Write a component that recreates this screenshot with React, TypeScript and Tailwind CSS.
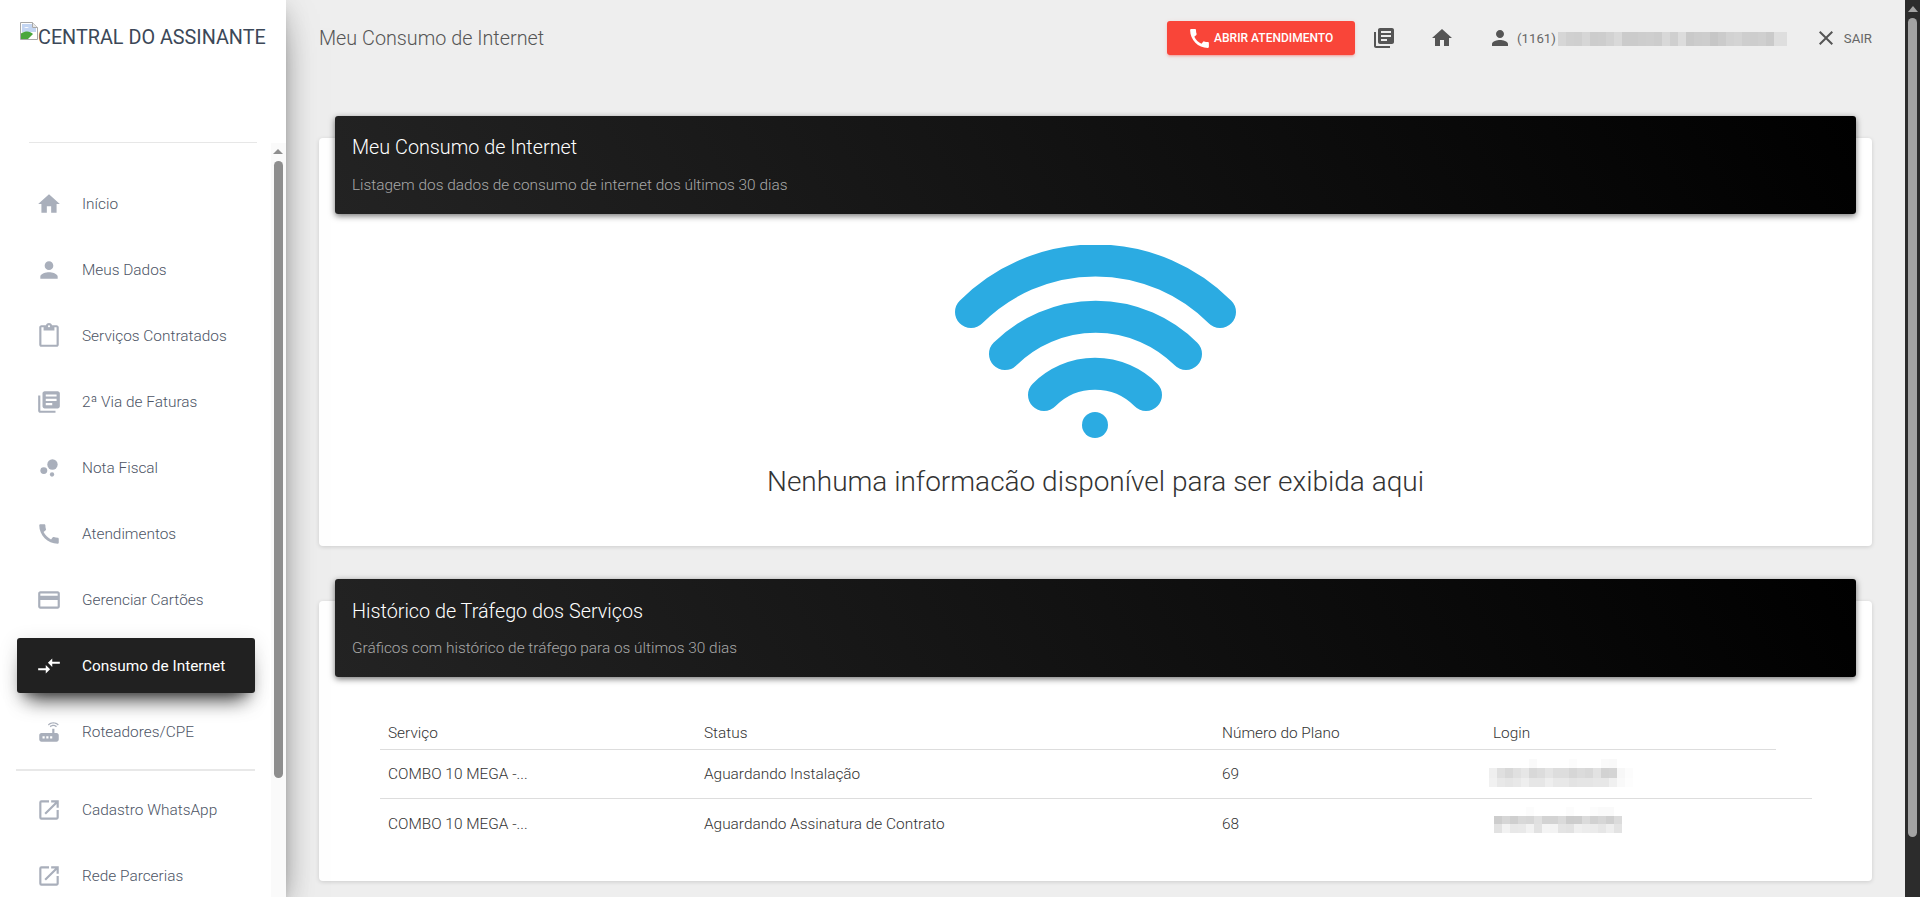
import {
  MdBubbleChart,
  MdCall,
  MdClose,
  MdCompareArrows,
  MdContentPaste,
  MdCreditCard,
  MdHome,
  MdLibraryBooks,
  MdOpenInNew,
  MdPerson,
  MdRouter,
} from "react-icons/md";
import type { IconType } from "react-icons";

interface MenuItem {
  label: string;
  icon: IconType;
  active?: boolean;
}

const mainMenu: MenuItem[] = [
  { label: "Início", icon: MdHome },
  { label: "Meus Dados", icon: MdPerson },
  { label: "Serviços Contratados", icon: MdContentPaste },
  { label: "2ª Via de Faturas", icon: MdLibraryBooks },
  { label: "Nota Fiscal", icon: MdBubbleChart },
  { label: "Atendimentos", icon: MdCall },
  { label: "Gerenciar Cartões", icon: MdCreditCard },
  { label: "Consumo de Internet", icon: MdCompareArrows, active: true },
  { label: "Roteadores/CPE", icon: MdRouter },
];

const externalMenu: MenuItem[] = [
  { label: "Cadastro WhatsApp", icon: MdOpenInNew },
  { label: "Rede Parcerias", icon: MdOpenInNew },
];

// pixelated patches that hide the customer's name and logins
const phoneBlocks = [
  "bg-[#d6d6d6]", "bg-[#d0d0d0]", "bg-[#cfcfcf]", "bg-[#d6d6d6]", "bg-[#cccccc]", "bg-[#cdcdcd]", "bg-[#d2d2d2]", "bg-[#d9d9d9]",
  "bg-[#cbcbcb]", "bg-[#cbcbcb]", "bg-[#cdcdcd]", "bg-[#cecece]", "bg-[#cccccc]", "bg-[#d8d8d8]", "bg-[#cfcfcf]", "bg-[#dcdcdc]",
  "bg-[#c9c9c9]", "bg-[#cccccc]", "bg-[#cdcdcd]", "bg-[#c6c6c6]", "bg-[#cbcbcb]", "bg-[#d2d2d2]", "bg-[#d4d4d4]", "bg-[#cecece]",
  "bg-[#cdcdcd]", "bg-[#cfcfcf]", "bg-[#cacaca]", "bg-[#dedede]", "bg-[#dedede]",
];
const loginOneFaint = [
  "bg-white", "bg-white", "bg-white", "bg-white", "bg-white", "bg-[#fafafa]", "bg-white", "bg-white",
  "bg-white", "bg-white", "bg-[#fcfcfc]", "bg-white", "bg-white", "bg-white", "bg-[#fafafa]", "bg-[#f9f9f9]", "bg-white", "bg-white",
];
const loginOneTop = [
  "bg-[#efefef]", "bg-[#dfdfdf]", "bg-[#d8d8d8]", "bg-[#e0e0e0]", "bg-[#e6e6e6]", "bg-[#d8d8d8]", "bg-[#dcdcdc]", "bg-[#e4e4e4]",
  "bg-[#dddddd]", "bg-[#dddddd]", "bg-[#d6d6d6]", "bg-[#dbdbdb]", "bg-[#d8d8d8]", "bg-[#e2e2e2]", "bg-[#d2d2d2]", "bg-[#d4d4d4]", "bg-[#f7f7f7]", "bg-[#fcfcfc]",
];
const loginOneBottom = [
  "bg-[#f1f1f1]", "bg-[#e8e8e8]", "bg-[#e5e5e5]", "bg-[#e8e8e8]", "bg-[#eeeeee]", "bg-[#e6e6e6]", "bg-[#e6e6e6]", "bg-[#eeeeee]",
  "bg-[#e8e8e8]", "bg-[#e8e8e8]", "bg-[#e3e3e3]", "bg-[#e5e5e5]", "bg-[#e5e5e5]", "bg-[#e7e7e7]", "bg-[#e7e7e7]", "bg-[#f0f0f0]", "bg-[#f9f9f9]", "bg-[#fdfdfd]",
];
const loginTwoFaint = [
  "bg-white", "bg-white", "bg-white", "bg-white", "bg-[#fcfcfc]", "bg-white", "bg-white", "bg-white",
  "bg-white", "bg-[#fcfcfc]", "bg-white", "bg-white", "bg-[#fcfcfc]", "bg-[#fafafa]", "bg-[#fafafa]", "bg-white",
];
const loginTwoTop = [
  "bg-[#cdcdcd]", "bg-[#d6d6d6]", "bg-[#cfcfcf]", "bg-[#d8d8d8]", "bg-[#d6d6d6]", "bg-[#e0e0e0]", "bg-[#d3d3d3]", "bg-[#d3d3d3]",
  "bg-[#dadada]", "bg-[#cccccc]", "bg-[#cdcdcd]", "bg-[#dbdbdb]", "bg-[#d1d1d1]", "bg-[#d6d6d6]", "bg-[#cfcfcf]", "bg-[#dbdbdb]",
];
const loginTwoBottom = [
  "bg-[#e2e2e2]", "bg-[#f2f2f2]", "bg-[#e8e8e8]", "bg-[#e9e9e9]", "bg-[#f2f2f2]", "bg-[#e2e2e2]", "bg-[#f4f4f4]", "bg-[#f3f3f3]",
  "bg-[#e4e4e4]", "bg-[#e2e2e2]", "bg-[#efefef]", "bg-[#ececec]", "bg-[#ebebeb]", "bg-[#e6e6e6]", "bg-[#eeeeee]", "bg-[#e3e3e3]",
];

const PixelRow = ({ blocks, className }: { blocks: string[]; className: string }) => (
  <div className={`flex overflow-hidden ${className}`}>
    {blocks.map((bg, i) => (
      <div key={i} className={`w-2 shrink-0 ${bg}`} />
    ))}
  </div>
);

const BrokenImage = () => (
  <svg width="18" height="18" viewBox="0 0 18 18" className="shrink-0">
    <path d="M0.5 0.5H12.5L17.5 5.5V17.5H0.5Z" fill="#fff" stroke="#a8a8a8" />
    <path d="M12.5 0.5V5.5H17.5" fill="#e8e8e8" stroke="#a8a8a8" />
    <path d="M2 2H12V6H16V10H2Z" fill="#c3d5f2" />
    <path d="M1 17V11.5C6 8.5 10 9 13 12L8 17Z" fill="#4aa63c" />
    <path d="M4 6C5.5 4.5 7.5 4.5 9 6Z" fill="#fff" />
    <path d="M10 17L17 10V17Z" fill="#fff" />
  </svg>
);

const WifiArt = () => (
  <svg width="282" height="193" viewBox="0 0 282 193" fill="none" className="mt-[31px] block">
    <g stroke="#2babe2" strokeWidth="32" strokeLinecap="round">
      <path d="M16 67A176 176 0 0 1 265 67" />
      <path d="M50 109A128 128 0 0 1 231 109" />
      <path d="M89 150A72 72 0 0 1 191 150" />
    </g>
    <circle cx="140" cy="180" r="13" fill="#2babe2" />
  </svg>
);

const NavItem = ({ item }: { item: MenuItem }) => {
  const Icon = item.icon;
  return (
    <div
      className={
        item.active
          ? "mb-[11px] ml-[17px] flex h-[55px] w-[238px] items-center rounded-[3px] bg-[#212121] pl-[19px] text-white shadow-[0_16px_20px_-10px_rgba(0,0,0,0.75),0_4px_20px_0_rgba(0,0,0,0.12),0_7px_8px_-5px_rgba(0,0,0,0.2)]"
          : "mb-[11px] ml-[17px] flex h-[55px] w-[238px] items-center pl-[19px] text-[#4d5565]"
      }
    >
      <Icon size={26} className={item.active ? "shrink-0 text-white" : "shrink-0 text-[#a9afbb]"} />
      <span className={item.active ? "ml-5 mt-[2px] text-[15.4px] font-normal" : "ml-5 mt-[2px] text-[15.4px] font-light"}>
        {item.label}
      </span>
    </div>
  );
};

const Sidebar = () => (
  <aside className="relative z-10 flex h-full w-[286px] shrink-0 flex-col overflow-hidden bg-white shadow-[0_16px_38px_-12px_rgba(0,0,0,0.56),0_4px_25px_0_rgba(0,0,0,0.12),0_8px_10px_-5px_rgba(0,0,0,0.2)]">
    <div className="h-[142px] shrink-0 pl-5 pt-[22px]">
      <div className="flex items-start text-[19.8px] leading-[30px] font-normal whitespace-nowrap text-[#3c4858]">
        <BrokenImage />
        <span className="mt-px">CENTRAL DO ASSINANTE</span>
      </div>
    </div>
    <div className="ml-[29px] h-px w-[228px] shrink-0 bg-[#e7e7e7]" />
    <div className="flex min-h-0 flex-1">
      <nav className="w-[271px] shrink-0 pt-[33px]">
        {mainMenu.map((item) => (
          <NavItem key={item.label} item={item} />
        ))}
        <div className="-mt-[1px] mb-[11px] ml-4 h-0.5 w-[239px] bg-[#e8e8e8]" />
        {externalMenu.map((item) => (
          <NavItem key={item.label} item={item} />
        ))}
      </nav>
      <div className="flex w-[15px] flex-col items-center bg-[#fafafa] pt-[6px]">
        <div className="mr-[1px] h-0 w-0 border-x-[5px] border-b-[5px] border-x-transparent border-b-[#8e8e8e]" />
        <div className="mr-[1px] mt-[7px] h-[617px] w-[9px] rounded-full bg-[#8e8e8e]" />
      </div>
    </div>
  </aside>
);

const TopBar = () => (
  <header className="flex h-[76px] shrink-0 items-center pl-[33px] pr-[33px] text-[#555]">
    <h1 className="mt-[2px] text-[19.8px] font-light text-[#555]">Meu Consumo de Internet</h1>
    <div className="ml-auto flex items-center">
      <button className="flex h-[34px] w-[188px] items-center rounded-[3px] bg-[#f94539] pl-[20px] text-[12px] font-medium text-white shadow-[0_2px_2px_0_rgba(244,67,54,0.14),0_3px_1px_-2px_rgba(244,67,54,0.2),0_1px_5px_0_rgba(244,67,54,0.12)]">
        <MdCall size={25} className="shrink-0" />
        <span className="ml-[2px] whitespace-nowrap">ABRIR ATENDIMENTO</span>
      </button>
      <MdLibraryBooks size={24} className="ml-[17px] shrink-0 text-[#555]" />
      <MdHome size={24} className="ml-[34px] shrink-0 text-[#555]" />
      <MdPerson size={24} className="ml-[34px] shrink-0 text-[#555]" />
      <span className="ml-[5px] mt-[2px] text-[13.2px] font-normal text-[#666]">(1161)</span>
      <PixelRow blocks={phoneBlocks} className="ml-[2px] mt-[2px] h-[14px] w-[229px]" />
      <MdClose size={24} className="ml-[27px] shrink-0 text-[#555]" />
      <span className="ml-[6px] mt-[2px] text-[13.2px] font-normal text-[#666]">SAIR</span>
    </div>
  </header>
);

const CardHeader = ({ title, subtitle, low }: { title: string; subtitle: string; low?: boolean }) => (
  <div className="relative mx-4 -mt-[22px] h-[98px] rounded-[3px] bg-[linear-gradient(60deg,#232323,#000000)] px-[17px] pt-[20px] shadow-[0_2px_6px_rgba(0,0,0,0.55)]">
    <h2 className={low ? "mt-px text-[19.8px] leading-[24px] font-light text-white" : "text-[19.8px] leading-[24px] font-light text-white"}>
      {title}
    </h2>
    <p className={low ? "mt-[14px] text-[15.4px] leading-[20px] font-light text-[#a8a8a8]" : "mt-[15px] text-[15.4px] leading-[20px] font-light text-[#a8a8a8]"}>
      {subtitle}
    </p>
  </div>
);

const Row = ({ cells, login, wide }: { cells: string[]; login?: React.ReactNode; wide?: boolean }) => (
  <div
    className={
      wide
        ? "grid h-[49px] w-[1432px] grid-cols-[316px_518px_271px_1fr] items-center border-b border-[#dddddd] pl-2"
        : "grid h-[49px] w-[1432px] grid-cols-[316px_518px_271px_1fr] items-center pl-2"
    }
  >
    {cells.map((c) => (
      <div key={c} className="mt-[2px] text-[15.4px] font-light text-[#333]">
        {c}
      </div>
    ))}
    {login}
  </div>
);

const TrafficTable = () => (
  <div className="ml-[61px] pb-[33px] pt-[40px]">
    <div className="grid h-[33px] w-[1396px] grid-cols-[316px_518px_271px_1fr] items-center border-b border-[#dddddd] pt-[1px] pl-2 text-[15.4px] font-light text-[#333]">
      <div>Serviço</div>
      <div>Status</div>
      <div>Número do Plano</div>
      <div>Login</div>
    </div>
    <Row
      wide
      cells={["COMBO 10 MEGA -...", "Aguardando Instalação", "69"]}
      login={
        <div className="-ml-[4px] mt-[9px] flex flex-col self-start">
          <PixelRow blocks={loginOneFaint} className="h-[9px]" />
          <PixelRow blocks={loginOneTop} className="h-[10px]" />
          <PixelRow blocks={loginOneBottom} className="h-[9px]" />
        </div>
      }
    />
    <Row
      cells={["COMBO 10 MEGA -...", "Aguardando Assinatura de Contrato", "68"]}
      login={
        <div className="ml-px mt-[8px] flex flex-col self-start">
          <PixelRow blocks={loginTwoFaint} className="h-[9px]" />
          <PixelRow blocks={loginTwoTop} className="h-[8px]" />
          <PixelRow blocks={loginTwoBottom} className="h-[9px]" />
        </div>
      }
    />
  </div>
);

const App = () => {
  return (
    <div className="flex h-screen w-full overflow-hidden bg-[#eeeeee] font-['Roboto',sans-serif]">
      <Sidebar />
      <main className="flex min-w-0 flex-1 flex-col overflow-hidden">
        <TopBar />
        <div className="mx-[33px] mt-[62px] rounded-[4px] bg-white shadow-[0_1px_4px_0_rgba(0,0,0,0.14)]">
          <CardHeader
            title="Meu Consumo de Internet"
            subtitle="Listagem dos dados de consumo de internet dos últimos 30 dias"
          />
          <div className="flex flex-col items-center pb-[44px]">
            <WifiArt />
            <p className="mt-6 text-[28px] leading-[40px] font-light text-[#333]">
              Nenhuma informacão disponível para ser exibida aqui
            </p>
          </div>
        </div>
        <div className="mx-[33px] mt-[55px] rounded-[4px] bg-white shadow-[0_1px_4px_0_rgba(0,0,0,0.14)]">
          <CardHeader
            low
            title="Histórico de Tráfego dos Serviços"
            subtitle="Gráficos com histórico de tráfego para os últimos 30 dias"
          />
          <TrafficTable />
        </div>
      </main>
      <div className="flex h-full w-[15px] shrink-0 flex-col items-center bg-[#2c2c2c] pt-[6px]">
        <div className="h-0 w-0 border-x-[5px] border-b-[6px] border-x-transparent border-b-[#a3a3a3]" />
        <div className="mt-[6px] h-[819px] w-[9px] rounded-full bg-[#a3a3a3]" />
      </div>
    </div>
  );
};

export default App;
